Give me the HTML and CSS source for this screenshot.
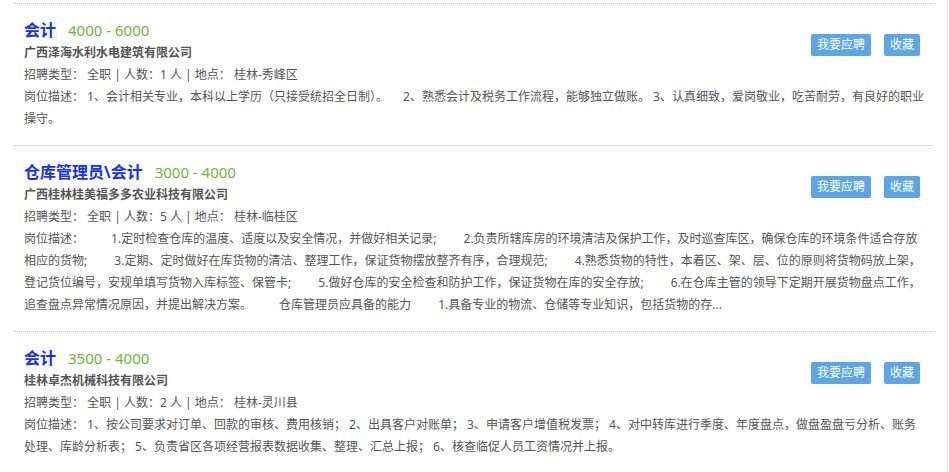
FILE: index.html
```html
<!DOCTYPE html>
<html lang="zh-CN">
  <head>
    <meta charset="UTF-8" />
    <meta name="viewport" content="width=device-width, initial-scale=1.0" />
    <title>招聘信息</title>
    <link rel="stylesheet" href="styles.css">
  </head>
  <body>
    <div class="page">
      <ul class="job-list">
        <li class="job">
          <div class="job-head">
            <div class="job-main">
              <h3 class="job-title"><a href="#">会计</a><span class="salary">4000 - 6000</span></h3>
              <p class="company">广西泽海水利水电建筑有限公司</p>
              <p class="info">招聘类型： 全职 | 人数：1 人 | 地点： 桂林-秀峰区</p>
            </div>
            <div class="job-actions">
              <a href="#" class="btn">我要应聘</a>
              <a href="#" class="btn">收藏</a>
            </div>
          </div>
          <p class="desc">岗位描述： 1、会计相关专业，本科以上学历（只接受统招全日制）。&emsp;&nbsp;2、熟悉会计及税务工作流程，能够独立做账。 3、认真细致，爱岗敬业，吃苦耐劳，有良好的职业操守。</p>
        </li>
        <li class="job">
          <div class="job-head">
            <div class="job-main">
              <h3 class="job-title"><a href="#">仓库管理员\会计</a><span class="salary">3000 - 4000</span></h3>
              <p class="company">广西桂林桂美福多多农业科技有限公司</p>
              <p class="info">招聘类型： 全职 | 人数：5 人 | 地点： 桂林-临桂区</p>
            </div>
            <div class="job-actions">
              <a href="#" class="btn">我要应聘</a>
              <a href="#" class="btn">收藏</a>
            </div>
          </div>
          <p class="desc">岗位描述：&emsp;&emsp;&nbsp;1.定时检查仓库的温度、适度以及安全情况，并做好相关记录;&emsp;&emsp;&nbsp;2.负责所辖库房的环境清洁及保护工作，及时巡查库区，确保仓库的环境条件适合存放相应的货物;&emsp;&emsp;&nbsp;3.定期、定时做好在库货物的清洁、整理工作，保证货物摆放整齐有序，合理规范;&emsp;&emsp;&nbsp;4.熟悉货物的特性，本着区、架、层、位的原则将货物码放上架，登记货位编号，安规单填写货物入库标签、保管卡;&emsp;&emsp;&nbsp;5.做好仓库的安全检查和防护工作，保证货物在库的安全存放;&emsp;&emsp;&nbsp;6.在仓库主管的领导下定期开展货物盘点工作，追查盘点异常情况原因，并提出解决方案。&emsp;&emsp;&nbsp;仓库管理员应具备的能力&emsp;&emsp;&nbsp;1.具备专业的物流、仓储等专业知识，包括货物的存...</p>
        </li>
        <li class="job">
          <div class="job-head">
            <div class="job-main">
              <h3 class="job-title"><a href="#">会计</a><span class="salary">3500 - 4000</span></h3>
              <p class="company">桂林卓杰机械科技有限公司</p>
              <p class="info">招聘类型： 全职 | 人数：2 人 | 地点： 桂林-灵川县</p>
            </div>
            <div class="job-actions">
              <a href="#" class="btn">我要应聘</a>
              <a href="#" class="btn">收藏</a>
            </div>
          </div>
          <p class="desc">岗位描述： 1、按公司要求对订单、回款的审核、费用核销； 2、出具客户对账单； 3、申请客户增值税发票； 4、对中转库进行季度、年度盘点，做盘盈盘亏分析、账务处理、库龄分析表； 5、负责省区各项经营报表数据收集、整理、汇总上报； 6、核查临促人员工资情况并上报。</p>
        </li>
      </ul>
    </div>
  </body>
</html>
```

FILE: styles.css
```css
body {
  margin: 0;
  padding: 0;
  font-family: "Noto Sans", "Noto Sans CJK SC", sans-serif;
  font-size: 12px;
  color: #555;
  background: #fff;
}
.page {
  width: 947px;
  min-height: 100vh;
  border-right: 1px solid #e3e3e3;
}
.job-list {
  list-style: none;
  margin: 0;
  padding: 3px 0 0 14px;
  width: 918px;
}
.job {
  border-top: 1px dotted #c8c8c8;
  padding: 14px 12px 15px 10px;
}
.job-head {
  display: flex;
  justify-content: space-between;
  align-items: flex-start;
}
.job-title {
  margin: 0;
  font-size: 16px;
  line-height: 24px;
  font-weight: bold;
}
.job-title a {
  color: #1230ff;
  text-decoration: none;
}
.salary {
  margin-left: 12px;
  font-size: 15px;
  font-weight: normal;
  color: #6cb83a;
}
.company {
  margin: 0;
  line-height: 22px;
  font-weight: bold;
}
.info {
  margin: 0;
  line-height: 22px;
}
.job-actions {
  display: flex;
  gap: 13px;
  margin-top: 16px;
}
.btn {
  display: inline-block;
  height: 22px;
  line-height: 22px;
  padding: 0 6px;
  background-color: #5ca6e6;
  color: #fff;
  text-decoration: none;
  border-radius: 2px;
}
.desc {
  margin: 0 -5px 0 0;
  line-height: 22px;
}
```
